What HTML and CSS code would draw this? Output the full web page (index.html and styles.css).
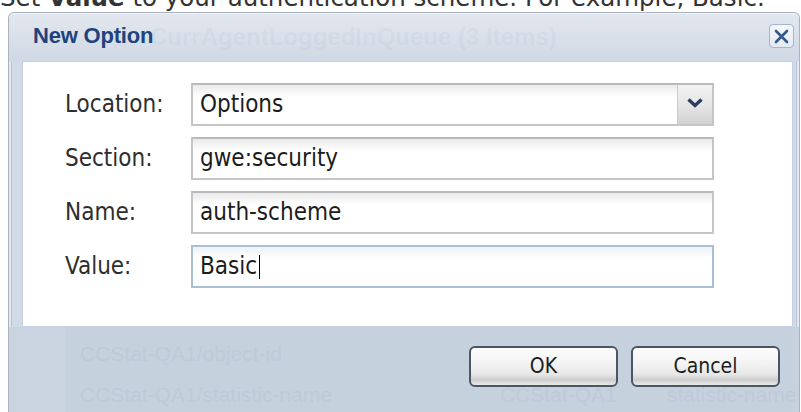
FILE: index.html
```html
<!DOCTYPE html>
<html lang="en">
<head>
<meta charset="utf-8">
<title>New Option</title>
<link rel="stylesheet" href="styles.css">
</head>
<body>
<p class="intro">Set <b>Value</b> to your authentication scheme. For example, Basic.</p>

<div class="dialog">
  <div class="titlebar">
    <span class="under-title">CurrAgentLoggedInQueue (3 Items)</span>
    <h1 class="title">New Option</h1>
    <button class="close" type="button" aria-label="Close">
      <svg width="15" height="15" viewBox="0 0 15 15"><path d="M2 2 L13 13 M13 2 L2 13" stroke="#34578c" stroke-width="2.6" stroke-linecap="round" fill="none"/></svg>
    </button>
  </div>

  <div class="panel">
    <div class="form">
      <label class="label">Location:</label>
      <div class="field select">
        <span class="field-text">Options</span>
        <span class="select-btn">
          <svg width="18" height="11" viewBox="0 0 18 11"><path d="M2.5 2.5 L9 8.5 L15.5 2.5" stroke="#2b3d5e" stroke-width="3.4" fill="none"/></svg>
        </span>
      </div>

      <label class="label">Section:</label>
      <div class="field"><span class="field-text">gwe:security</span></div>

      <label class="label">Name:</label>
      <div class="field"><span class="field-text">auth-scheme</span></div>

      <label class="label">Value:</label>
      <div class="field focused"><span class="field-text">Basic</span><span class="caret"></span></div>
    </div>
  </div>

  <div class="footer">
    <div class="under-table">
      <span></span><span>CCStat-QA1/object-id</span><span></span><span></span>
      <span></span><span>CCStat-QA1/statistic-name</span><span>CCStat-QA1</span><span>statistic-name</span>
    </div>
    <button class="btn" type="button">OK</button>
    <button class="btn" type="button">Cancel</button>
  </div>
</div>
</body>
</html>
```

FILE: styles.css
```css
html, body {
  margin: 0;
  padding: 0;
  background: #ffffff;
  overflow: hidden;
  width: 801px;
  height: 412px;
}

.intro {
  margin: -16px 0 0 0;
  height: 28px;
  font: 24.5px/28px "DejaVu Sans", sans-serif;
  color: #333;
  white-space: nowrap;
}

.intro b {
  font-weight: bold;
}

/* dialog window */
.dialog {
  margin-left: 8px;
  width: 790px;
  height: 400px;
  border: 1px solid #aab3bf;
  border-bottom: 0;
  border-radius: 6px 6px 0 0;
  background: #d1dae6;
  box-shadow: inset 0 0 0 2px #e2e8f0, inset 0 0 0 3px #b9c5d4;
  display: flex;
  flex-direction: column;
  overflow: hidden;
}

.titlebar {
  position: relative;
  height: 48px;
  flex: none;
  display: flex;
  align-items: center;
  justify-content: space-between;
  padding: 0 5px 0 24px;
  background: linear-gradient(#e3e8ef, #d9e0ea 50%, #cfd8e4);
  border-radius: 5px 5px 0 0;
  box-shadow: inset 0 1px 0 #eef2f6;
}

.under-title {
  position: absolute;
  left: 141px;
  top: 10px;
  font: bold 24px/28px "Liberation Sans", Arial, sans-serif;
  color: rgba(110, 130, 160, 0.08);
  white-space: nowrap;
}

.title {
  position: relative;
  margin: 0 0 2px 0;
  font: bold 22px/26px "Liberation Sans", Arial, sans-serif;
  color: #21427c;
  letter-spacing: -0.2px;
}

.close {
  position: relative;
  width: 25px;
  height: 24px;
  padding: 0;
  margin-top: -2px;
  border: 1px solid #a3b6cd;
  border-radius: 4px;
  background: linear-gradient(#f6f8fb, #e2e9f2);
  display: flex;
  align-items: center;
  justify-content: center;
}

/* white content panel */
.panel {
  flex: none;
  height: 266px;
  margin: 0 6px 0 13px;
  background: #ffffff;
  border: 1px solid #c2d0e0;
  box-shadow: 0 1px 0 #e4ebf3;
  padding: 21px 0 0 42px;
  box-sizing: border-box;
}

.form {
  display: grid;
  grid-template-columns: 126px 523px;
  grid-auto-rows: 43px;
  row-gap: 11px;
  align-items: center;
}

.label {
  font: 24px "DejaVu Sans Condensed", "DejaVu Sans", sans-serif;
  font-stretch: condensed;
  color: #2e2e2e;
  padding-bottom: 2px;
}

.field {
  height: 43px;
  box-sizing: border-box;
  border: 2px solid #c5c5c5;
  border-top-color: #b9b9b9;
  background: linear-gradient(#eaeaea, #ffffff 12px);
  display: flex;
  align-items: center;
  padding-left: 7px;
  position: relative;
}

.field.focused {
  border-color: #a9bfd7;
  background: linear-gradient(#eef2f7, #ffffff 12px);
}

.field-text {
  font: 24px "DejaVu Sans Condensed", "DejaVu Sans", sans-serif;
  font-stretch: condensed;
  color: #1c1c1c;
  padding-bottom: 2px;
}

.caret {
  display: inline-block;
  width: 1px;
  height: 24px;
  margin-left: 2px;
  background: #000;
}

.select-btn {
  margin-left: auto;
  width: 35px;
  align-self: stretch;
  border-left: 1px solid #cbcbcb;
  background: linear-gradient(#f3f3f3, #e4e4e4 55%, #d2d2d2);
  display: flex;
  align-items: center;
  justify-content: center;
  padding-bottom: 5px;
  box-sizing: border-box;
}

/* button row */
.footer {
  position: relative;
  flex: 1;
  display: flex;
  justify-content: flex-end;
  align-items: flex-start;
  gap: 13px;
  padding: 19px 19px 0 0;
  background: #cad4e1;
}

.under-table {
  position: absolute;
  left: 56px;
  top: 0;
  right: 0;
  bottom: 0;
  padding-top: 6px;
  display: grid;
  grid-template-columns: 15px 420px 167px auto;
  grid-auto-rows: 41px;
  background: #c6d1de;
  font: 21px/41px "Liberation Sans", Arial, sans-serif;
  color: #bfcad8;
  white-space: nowrap;
  overflow: hidden;
}

.btn {
  position: relative;
  width: 149px;
  height: 41px;
  border: 2px solid #4b5665;
  border-radius: 6px;
  background: linear-gradient(#fdfdfd 0%, #f2f2f2 45%, #e6e6e6 72%, #cdcdcd 86%, #e9e9e9 100%);
  font: 21px "DejaVu Sans Condensed", "DejaVu Sans", sans-serif;
  font-stretch: condensed;
  color: #1e1e1e;
  padding: 0 0 2px 0;
}
```
